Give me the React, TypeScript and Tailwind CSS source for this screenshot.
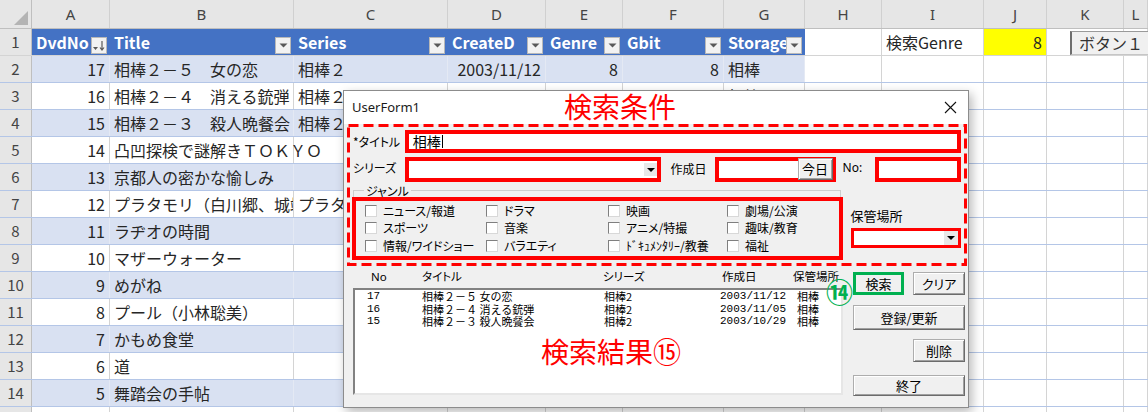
import React from "react";

const COLS = [
  { id: "A", w: "w-[78px]" },
  { id: "B", w: "w-[184px]" },
  { id: "C", w: "w-[154px]" },
  { id: "D", w: "w-[98px]" },
  { id: "E", w: "w-[77px]" },
  { id: "F", w: "w-[101px]" },
  { id: "G", w: "w-[81px]" },
  { id: "H", w: "w-[77px]" },
  { id: "I", w: "w-[102px]" },
  { id: "J", w: "w-[63px]" },
  { id: "K", w: "w-[77px]" },
  { id: "L", w: "w-[24px]" },
];

type Dvd = {
  no: number;
  title: string;
  series?: string;
  date?: string;
  genre?: number;
  gbit?: number;
  storage?: string;
  spill?: boolean;
};

const DVDS: Dvd[] = [
  { no: 17, title: "相棒２－５　女の恋", series: "相棒２", date: "2003/11/12", genre: 8, gbit: 8, storage: "相棒" },
  { no: 16, title: "相棒２－４　消える銃弾", series: "相棒２", date: "2003/11/05", genre: 8, gbit: 8, storage: "相棒" },
  { no: 15, title: "相棒２－３　殺人晩餐会", series: "相棒２", date: "2003/10/29", genre: 8, gbit: 8, storage: "相棒" },
  { no: 14, title: "凸凹探検で謎解きＴＯＫＹＯ", spill: true },
  { no: 13, title: "京都人の密かな愉しみ" },
  { no: 12, title: "プラタモリ（白川郷、城端）", series: "プラタモリ" },
  { no: 11, title: "ラヂオの時間" },
  { no: 10, title: "マザーウォーター" },
  { no: 9, title: "めがね" },
  { no: 8, title: "プール（小林聡美）" },
  { no: 7, title: "かもめ食堂" },
  { no: 6, title: "道" },
  { no: 5, title: "舞踏会の手帖" },
];

const GENRES = [
  "ニュース/報道",
  "ドラマ",
  "映画",
  "劇場/公演",
  "スポーツ",
  "音楽",
  "アニメ/特撮",
  "趣味/教育",
  "情報/ワイドショー",
  "バラエティ",
  "ﾄﾞｷｭﾒﾝﾀﾘｰ/教養",
  "福祉",
];

const RESULTS = [
  { no: "17", title: "相棒２－５ 女の恋", series: "相棒2", date: "2003/11/12", storage: "相棒" },
  { no: "16", title: "相棒２－４ 消える銃弾", series: "相棒2", date: "2003/11/05", storage: "相棒" },
  { no: "15", title: "相棒２－３ 殺人晩餐会", series: "相棒2", date: "2003/10/29", storage: "相棒" },
];

const HEADS = ["DvdNo", "Title", "Series", "CreateD", "Genre", "Gbit", "Storage"];

function FilterButton({ sorted }: { sorted?: boolean }) {
  return (
    <div className="absolute bottom-[1px] right-[2px] flex h-[17px] w-[16px] items-center justify-center border border-[#b8b8b8] bg-[#f2f2f2]">
      {sorted ? (
        <svg width="14" height="12" viewBox="0 0 14 12">
          <path d="M1 7h5l-2.5 3z" fill="#595959" />
          <path d="M10 1v9M8 7.5l2 2.5 2-2.5" stroke="#595959" strokeWidth="1.2" fill="none" />
        </svg>
      ) : (
        <svg width="9" height="5" viewBox="0 0 9 5">
          <path d="M0.5 0.5h8l-4 4z" fill="#595959" />
        </svg>
      )}
    </div>
  );
}

function SheetRow({ n, children }: { n?: number; children: React.ReactNode }) {
  return (
    <div className="flex h-[27px] border-b border-[#d4d4d4]">
      <div className="flex w-[32px] shrink-0 items-center justify-center border-r border-[#bfbfbf] bg-[#e6e6e6] text-[15px] text-[#444]">
        {n}
      </div>
      {children}
    </div>
  );
}

function Cell({
  w,
  className = "",
  children,
}: {
  w: string;
  className?: string;
  children?: React.ReactNode;
}) {
  return (
    <div
      className={[
        "relative flex shrink-0 items-center whitespace-nowrap border-r border-[#d4d4d4] px-[4px] text-[16px] text-[#262626]",
        w,
        className,
      ].join(" ")}
    >
      {children}
    </div>
  );
}

function DropArrow({ className = "" }: { className?: string }) {
  return (
    <div className={["flex items-center justify-center bg-[#e8e8e8]", className].join(" ")}>
      <svg width="8" height="4" viewBox="0 0 8 4">
        <path d="M0 0h8l-4 4z" fill="#000" />
      </svg>
    </div>
  );
}

function WinButton({
  label,
  className = "",
}: {
  label: string;
  className?: string;
}) {
  return (
    <div
      className={[
        "flex items-center justify-center border border-[#adadad] border-b-[#6b6b6b] border-r-[#6b6b6b] bg-[#f0f0f0] text-[13px] text-black shadow-[inset_1px_1px_0_#ffffff,inset_-1px_-1px_0_#a0a0a0]",
        className,
      ].join(" ")}
    >
      {label}
    </div>
  );
}

function CheckItem({ label }: { label: string }) {
  return (
    <div className="flex h-[17.5px] items-center gap-[6px]">
      <div className="h-[12px] w-[12px] shrink-0 border border-[#7f7f7f] border-b-[#d8d8d8] border-r-[#d8d8d8] bg-white" />
      <span className="whitespace-nowrap text-[12px] leading-none">{label}</span>
    </div>
  );
}

function UserForm() {
  return (
    <div className="absolute left-[343px] top-[90px] z-30 h-[318px] w-[626px] border border-[#8c8c8c] bg-[#f0f0f0] font-['Noto_Sans_CJK_JP',sans-serif] text-black shadow-[3px_4px_10px_rgba(0,0,0,0.28)] [font-feature-settings:'palt']">
      {/* title bar */}
      <div className="relative flex h-[33px] items-center justify-between bg-white pl-[8px] pr-[11px]">
        <span className="font-['Noto_Sans',sans-serif] text-[13px] text-[#1a1a1a]">UserForm1</span>
        <span className="absolute left-[220px] top-[1px] text-[28px] leading-none text-[#ff0000]">検索条件</span>
        <svg width="13" height="13" viewBox="0 0 13 13">
          <path d="M1 1l11 11M12 1L1 12" stroke="#111" strokeWidth="1.1" />
        </svg>
      </div>

      {/* search conditions */}
      <div className="relative ml-[3px] h-[142px] w-[620px]">
        <svg className="pointer-events-none absolute inset-0 z-20" width="620" height="142">
          <rect x="1.5" y="1.5" width="617" height="139" fill="none" stroke="#ff0000" strokeWidth="3" strokeDasharray="10 5" />
        </svg>
        <div className="px-[6px] pt-[6px]">
          <div className="flex h-[23px] items-center">
            <span className="w-[52px] text-[12px]">*タイトル</span>
            <div className="flex h-[23px] w-[559px] items-center border-4 border-[#ff0000] bg-white pl-[4px] text-[14px]">
              相棒<span className="ml-[1px] h-[13px] w-px bg-black" />
            </div>
          </div>
          <div className="mt-[4px] flex h-[25px] items-start">
            <span className="mt-[2px] w-[52px] text-[12px]">シリーズ</span>
            <div className="flex h-[25px] w-[258px] items-stretch justify-end border-4 border-[#ff0000] bg-white">
              <DropArrow className="my-[2px] w-[13px]" />
            </div>
            <span className="ml-[9px] mt-[3px] w-[45px] text-[12px]">作成日</span>
            <div className="relative h-[25px] w-[121px] border-4 border-[#ff0000] bg-white">
              <WinButton label="今日" className="absolute -top-[3px] right-[-1px] h-[22px] w-[35px] text-[11px]" />
            </div>
            <span className="ml-[7px] mt-[2px] w-[33px] font-['Noto_Sans',sans-serif] text-[12px]">No:</span>
            <div className="h-[25px] w-[86px] border-4 border-[#ff0000] bg-white" />
          </div>
          <div className="mt-[4px] flex">
            <div className="relative -ml-px flex h-[75px] w-[493px] flex-col">
              <div className="absolute bottom-[2px] left-px right-[2px] top-[4px] border border-[#cdcdcd]" />
              <span className="absolute left-[12px] top-[-2px] bg-[#f0f0f0] px-[2px] text-[12px] leading-[13px]">ジャンル</span>
              <div className="relative mt-[11px] h-[63px] border-4 border-[#ff0000] bg-[#f0f0f0] pl-[9px] pt-px">
                <div className="grid grid-cols-[121px_122px_119px_1fr]">
                  {GENRES.map((g) => (
                    <CheckItem key={g} label={g} />
                  ))}
                </div>
              </div>
            </div>
            <div className="ml-[8px] flex w-[111px] flex-col">
              <span className="mt-[22px] text-[13px] leading-[16px]">保管場所</span>
              <div className="mt-[4px] flex h-[20px] items-stretch justify-end border-[3px] border-[#ff0000] bg-white">
                <DropArrow className="w-[14px]" />
              </div>
            </div>
          </div>
        </div>
      </div>

      {/* results */}
      <div className="relative flex">
        <div className="ml-[9px] w-[490px]">
          <div className="grid h-[22px] grid-cols-[51px_181px_119px_71px_1fr] items-center pl-[18px] text-[11.5px]">
            <span className="font-['Noto_Sans',sans-serif]">No</span>
            <span>タイトル</span>
            <span>シリーズ</span>
            <span>作成日</span>
            <span>保管場所</span>
          </div>
          <div className="h-[107px] border-2 border-[#828282] border-b-[#e6e6e6] border-r-[#e6e6e6] bg-white text-[11px] leading-[12.5px] [font-feature-settings:normal]">
            {RESULTS.map((r) => (
              <div key={r.no} className="grid grid-cols-[55px_182px_116px_77px_1fr] pl-[12px] font-['Liberation_Mono','Noto_Sans_CJK_JP',monospace]">
                <span>{r.no}</span>
                <span className="font-['Noto_Sans_CJK_JP',sans-serif]">{r.title}</span>
                <span className="font-['Noto_Sans_CJK_JP',sans-serif]">{r.series}</span>
                <span>{r.date}</span>
                <span className="font-['Noto_Sans_CJK_JP',sans-serif]">{r.storage}</span>
              </div>
            ))}
          </div>
        </div>
        <div className="ml-[10px] flex w-[112px] flex-col">
          <div className="mt-[6px] flex justify-between">
            <div className="flex h-[23px] w-[51px] items-center justify-center border-[3px] border-[#00b050] bg-[#f0f0f0] text-[13px]">
              検索
            </div>
            <WinButton label="クリア" className="h-[23px] w-[52px]" />
          </div>
          <WinButton label="登録/更新" className="mt-[10px] h-[25px] w-[112px]" />
          <WinButton label="削除" className="mt-[9px] h-[23px] w-[52px] self-end" />
          <WinButton label="終了" className="mt-[13px] h-[21px] w-[112px]" />
        </div>
        <span className="absolute left-[482px] top-[12px] text-[27px] font-bold leading-none text-[#00b050]">⑭</span>
        <span className="absolute left-[197px] top-[71px] text-[28px] leading-none text-[#ff0000]">検索結果⑮</span>
      </div>
    </div>
  );
}

export default function App() {
  return (
    <div className="relative h-[412px] w-[1148px] overflow-hidden bg-white font-['Noto_Sans_CJK_JP','Noto_Sans',sans-serif]">
      {/* column letters */}
      <div className="flex h-[29px] border-b border-[#bfbfbf] bg-[#e6e6e6]">
        <div className="relative w-[32px] shrink-0 border-r border-[#bfbfbf]">
          <svg className="absolute bottom-[3px] right-[3px]" width="14" height="14" viewBox="0 0 14 14">
            <path d="M14 0v14H0z" fill="#b4b4b4" />
          </svg>
        </div>
        {COLS.map((c) => (
          <div
            key={c.id}
            className={[
              "flex shrink-0 items-center justify-center border-r border-[#d0d0d0] font-['Noto_Sans',sans-serif] text-[15px] text-[#444]",
              c.w,
            ].join(" ")}
          >
            {c.id}
          </div>
        ))}
      </div>

      {/* row 1: table header */}
      <SheetRow n={1}>
        {HEADS.map((h, i) => (
          <Cell
            key={h}
            w={COLS[i].w}
            className="overflow-hidden border-r-[#4472c4] bg-[#4472c4] font-bold text-white"
          >
            {h}
            <FilterButton sorted={i === 0} />
          </Cell>
        ))}
        <Cell w={COLS[7].w} />
        <Cell w={COLS[8].w}>検索Genre</Cell>
        <Cell w={COLS[9].w} className="justify-end bg-[#ffff00]">8</Cell>
        <Cell w={COLS[10].w} className="overflow-visible">
          <div className="absolute left-[23px] top-[2px] z-10 flex h-[24px] w-[90px] items-center border border-[#c6c6c6] border-l-2 border-l-[#6e6e6e] border-t-[#9a9a9a] bg-[#f0f0f0] pl-[7px] text-[16px] text-[#333]">
            ボタン１
          </div>
        </Cell>
        <Cell w={COLS[11].w} />
      </SheetRow>

      {/* data rows */}
      {DVDS.map((d, i) => {
        const band = i % 2 === 0 ? "bg-[#d9e1f2] border-r-[#e4e9f4]" : "bg-white";
        return (
          <div key={d.no} className="[&>div]:border-b-[#b4c6e7]">
            <SheetRow n={i + 2}>
              <Cell w={COLS[0].w} className={["justify-end", band].join(" ")}>{d.no}</Cell>
              <Cell
                w={COLS[1].w}
                className={[d.spill ? "z-10 overflow-visible" : "overflow-hidden", band].join(" ")}
              >
                {d.title}
              </Cell>
              <Cell w={COLS[2].w} className={["overflow-hidden", band].join(" ")}>{d.series}</Cell>
              <Cell w={COLS[3].w} className={["justify-end", band].join(" ")}>{d.date}</Cell>
              <Cell w={COLS[4].w} className={["justify-end", band].join(" ")}>{d.genre}</Cell>
              <Cell w={COLS[5].w} className={["justify-end", band].join(" ")}>{d.gbit}</Cell>
              <Cell w={COLS[6].w} className={band}>{d.storage}</Cell>
              {COLS.slice(7).map((c) => (
                <Cell key={c.id} w={c.w} />
              ))}
            </SheetRow>
          </div>
        );
      })}
      <SheetRow>
        {COLS.map((c) => (
          <Cell key={c.id} w={c.w} />
        ))}
      </SheetRow>

      <UserForm />
    </div>
  );
}
